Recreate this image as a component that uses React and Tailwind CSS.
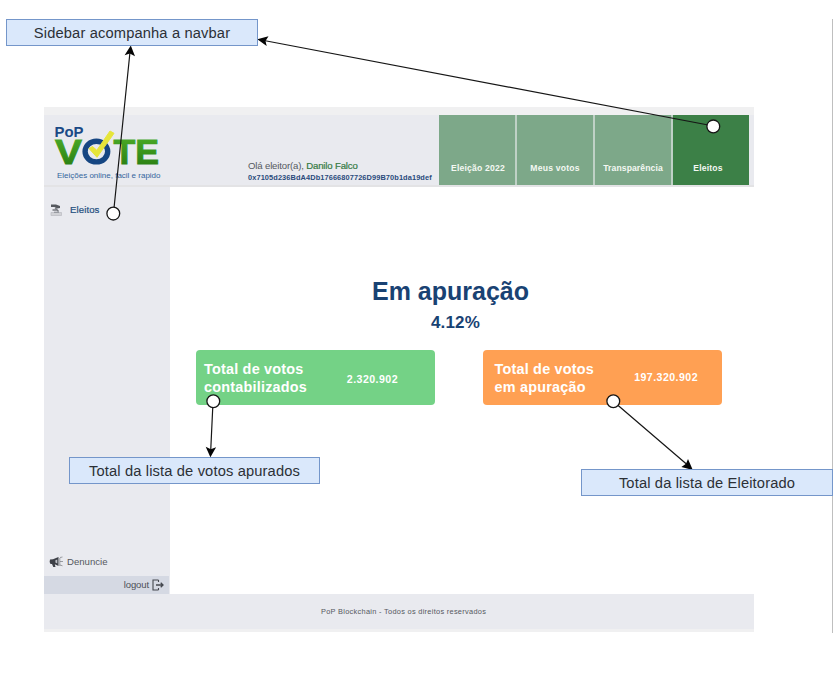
import React from "react";

function Logo() {
  return (
    <svg className="block h-[69px] w-[130px]" viewBox="44 116 130 69" fontFamily="'Liberation Sans', Arial, sans-serif">
      <defs>
        <linearGradient id="leaf" x1="0" y1="0" x2="0" y2="1">
          <stop offset="0" stopColor="#4fb02a" />
          <stop offset="1" stopColor="#25790f" />
        </linearGradient>
      </defs>
      <text x="54.5" y="137.5" fontSize="15.5" fontWeight="700" fill="#1b4a86" textLength="29" lengthAdjust="spacingAndGlyphs">PoP</text>
      <g fontWeight="700" fontSize="35" fill="url(#leaf)" stroke="url(#leaf)" strokeWidth="0.9">
        <text x="55" y="165.3" textLength="27" lengthAdjust="spacingAndGlyphs">V</text>
        <text x="113.5" y="165.3" textLength="45.5" lengthAdjust="spacingAndGlyphs">TE</text>
      </g>
      <ellipse cx="96.4" cy="152.6" rx="11.3" ry="10.3" fill="#e9eaef" stroke="#164682" strokeWidth="5.4" />
      <path d="M89 149.5 L92.5 147.5 L96.8 151.3 L110 132 L114 134.3 L97 158.3 Z" fill="#e6e53a" stroke="#e6e53a" strokeWidth="1" strokeLinejoin="round" />
      <text x="57" y="179.3" fontSize="8" fill="#34659c" textLength="103.5" lengthAdjust="spacingAndGlyphs">Eleições online, facil e rapido</text>
    </svg>
  );
}

function BallotIcon() {
  return (
    <svg className="h-[14px] w-[13px]" viewBox="0 0 13 14" fill="none">
      <path d="M1 1.5h5l4 1.5v2L7 5.5 5 4H1z" fill="#55585e" />
      <path d="M5 4.5 8.5 8.5M2.5 7h5" stroke="#777a80" strokeWidth="1.4" />
      <path d="M1 9.5h10.5v3H1z" fill="#d1d2d6" stroke="#b9bac0" strokeWidth=".7" />
      <path d="M4 9.2h5" stroke="#85888e" />
    </svg>
  );
}

function MegaphoneIcon() {
  return (
    <svg className="h-[12px] w-[15px]" viewBox="0 0 15 12">
      <path d="M1 3.5 4 3.2 9.5 1v9L5.8 8.2 6.5 11H4.3L3 8H1.5Q0 6 1 3.5z" fill="#3d4047" />
      <path d="M8.3 3.5v4L6.4 6.5V4.2z" fill="#bfc1c8" />
      <path d="M11 1.5 13.5 1M11 5.5h3M11 9l2.5.8M10.8 2v8" stroke="#777a80" strokeWidth=".7" />
    </svg>
  );
}

function LogoutIcon() {
  return (
    <svg className="h-[12px] w-[12px]" viewBox="0 0 12 12" fill="none" stroke="#44474e">
      <path d="M6.5 1H1v10h5.5M6.5 1v2M6.5 11V9" strokeWidth="1.1" />
      <path d="M4 6h7M8.7 3.8 11 6 8.7 8.2" strokeWidth="1.3" />
    </svg>
  );
}

const tabs = [
  { label: "Eleição 2022", box: "bg-[#7da889] pl-[2px]", text: "tracking-[0.2px]" },
  { label: "Meus votos", box: "bg-[#7da889]", text: "tracking-[0.2px]" },
  { label: "Transparência", box: "bg-[#7da889]", text: "tracking-[0.1px]" },
  { label: "Eleitos", box: "bg-[#3c8047] pr-[6px]", text: "tracking-[0.2px]" },
];

function Header() {
  return (
    <header className="flex h-[72px] border-b-2 border-[#e3e3e5] bg-[#e9eaef]">
      <div className="w-[204px]">
        <Logo />
      </div>
      <div className="w-[191px] pt-[45px] whitespace-nowrap">
        <p className="h-[12px] text-[9.6px] leading-[12px] tracking-[-0.16px] text-[#555960]">
          Olá eleitor(a), <span className="text-[#357a43] [-webkit-text-stroke:0.2px_#357a43]">Danilo Falco</span>
        </p>
        <p className="mt-[1px] text-[7.4px] leading-[10px] font-bold tracking-[0.1px] text-[#294b7c]">
          0x7105d236BdA4Db17666807726D99B70b1da19def
        </p>
      </div>
      <nav className="flex h-[70px] gap-[2px] bg-[#bfd1c6]">
        {tabs.map((t) => (
          <a key={t.label} className={`flex w-[76px] items-end justify-center pb-[11.5px] text-[8.6px] leading-[12px] font-bold whitespace-nowrap text-[#f4f8f3] ${t.box} ${t.text}`}>
            {t.label}
          </a>
        ))}
      </nav>
    </header>
  );
}

function Sidebar() {
  return (
    <aside className="flex w-[126px] flex-col bg-[#e9eaef]">
      <div className="flex items-center gap-[7px] pt-[16px] pl-[6px]">
        <BallotIcon />
        <span className="text-[9.6px] leading-[14px] tracking-[0.1px] text-[#1f4f80] [-webkit-text-stroke:0.2px_#1f4f80]">Eleitos</span>
      </div>
      <div className="mt-auto flex items-center gap-[3px] pb-[8px] pl-[5px]">
        <MegaphoneIcon />
        <span className="text-[9.6px] leading-[12px] text-[#55585e]">Denuncie</span>
      </div>
      <div className="flex h-[18px] w-[125px] items-center justify-end gap-[3px] bg-[#d5d9e3] pr-[5px]">
        <span className="text-[9.5px] leading-[12px] tracking-[-0.1px] text-[#4c4f56]">logout</span>
        <LogoutIcon />
      </div>
    </aside>
  );
}

function TotalCard({ lines, value, card, number }) {
  return (
    <div className={`flex h-[55px] items-start rounded-[4px] text-white ${card}`}>
      <p className="text-[14.4px] leading-[17.8px] font-bold tracking-[0.22px] whitespace-nowrap">
        {lines[0]}
        <br />
        {lines[1]}
      </p>
      <span className={`ml-auto text-[10.6px] leading-[12px] font-bold tracking-[0.45px] ${number}`}>{value}</span>
    </div>
  );
}

function Results() {
  return (
    <main className="flex-1 bg-white">
      <div className="pt-[88px] pl-[202px] text-[#194273]">
        <h1 className="text-[25px] leading-[32px] font-bold whitespace-nowrap">Em apuração</h1>
        <p className="mt-[6px] pl-[59px] text-[17px] leading-[20px] font-bold tracking-[0.15px]">4.12%</p>
      </div>
      <div className="mt-[17px] ml-[26px] flex gap-[48px]">
        <TotalCard lines={["Total de votos", "contabilizados"]} value="2.320.902" card="w-[239px] bg-[#74d286] pt-[11px] pl-[8px]" number="mt-[12px] mr-[37px]" />
        <TotalCard lines={["Total de votos", "em apuração"]} value="197.320.902" card="w-[239px] bg-[#ffa053] pt-[11px] pl-[11.5px]" number="mt-[10px] mr-[24px]" />
      </div>
    </main>
  );
}

function Note({ children, place }) {
  return (
    <div className={`absolute flex h-[27px] items-center justify-center border border-[#7496ca] bg-[#dae8fb] text-[14.7px] leading-[20px] tracking-[0.14px] whitespace-nowrap text-[#2c3036] ${place}`}>
      {children}
    </div>
  );
}

function Connectors() {
  return (
    <svg className="absolute top-0 left-0 h-[673px] w-[834px]" viewBox="0 0 834 673">
      <g stroke="#161616" strokeWidth="1.2">
        <path d="M113.5 213 L130 52M713.5 126 L264 40.5M213 402 L210.7 451M613.5 401.5 L687 464.5" />
      </g>
      <g fill="#050505">
        <path d="M130.8 45.5 L135 56.2 L129.8 53.5 L124.6 55.2Z" />
        <path d="M257.3 39.3 L268.5 36.3 L265.5 40.9 L266.7 46Z" />
        <path d="M210.4 457.2 L205.7 446.7 L210.8 449.2 L216.1 447.2Z" />
        <path d="M692.8 470 L681.4 467 L686 463.8 L688 459.1Z" />
      </g>
      <g fill="white" stroke="#161616" strokeWidth="1.3">
        <circle cx="113.3" cy="213.6" r="6.4" />
        <circle cx="713.3" cy="126.4" r="6.4" />
        <circle cx="213.3" cy="401.3" r="6.4" />
        <circle cx="613.3" cy="401.3" r="6.4" />
      </g>
    </svg>
  );
}

export default function App() {
  return (
    <div className="relative h-[673px] w-[834px] overflow-hidden bg-white pt-[107px] pl-[44px] font-['Liberation_Sans',Arial,sans-serif]">
      <div className="flex h-[525px] w-[710px] flex-col bg-[#f0f0f1] pt-[8px]">
        <Header />
        <div className="flex h-[407px]">
          <Sidebar />
          <Results />
        </div>
        <footer className="flex h-[35px] items-center bg-[#e9eaef] pl-[277px] text-[7.4px] tracking-[0.29px] whitespace-nowrap text-[#55585e]">
          PoP Blockchain - Todos os direitos reservados
        </footer>
      </div>
      <div className="absolute top-[19px] left-[832px] h-[614px] w-px bg-[#bfbfbf]" />
      <Connectors />
      <Note place="top-[19px] left-[6px] w-[252px]">Sidebar acompanha a navbar</Note>
      <Note place="top-[457px] left-[69px] w-[251px]">Total da lista de votos apurados</Note>
      <Note place="top-[469px] left-[581px] w-[252px]">Total da lista de Eleitorado</Note>
    </div>
  );
}
